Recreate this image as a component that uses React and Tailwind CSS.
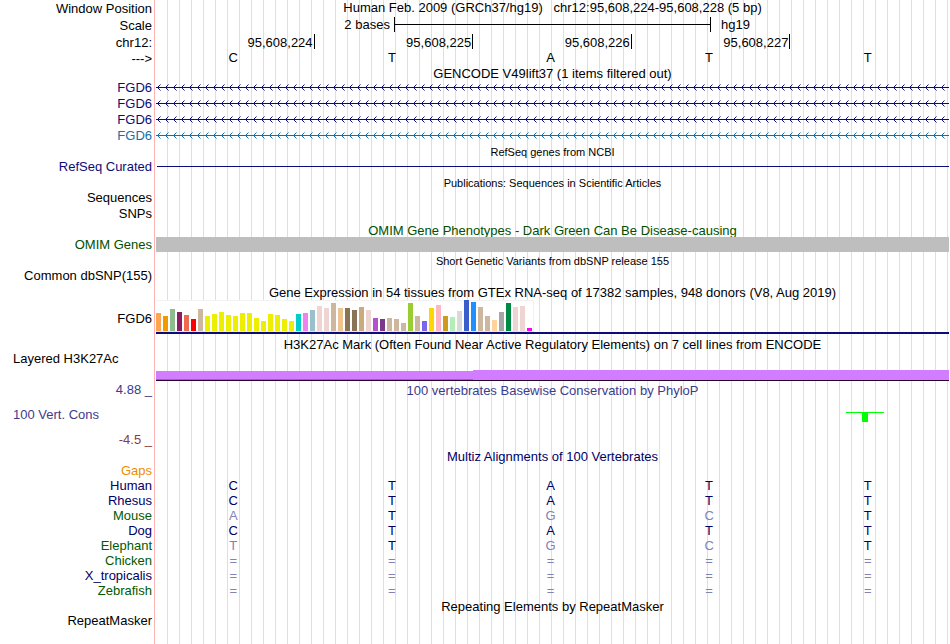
import clsx from "clsx";

const GTEX_BARS = [
  [18, "#ffa54f"], [15, "#ee9a00"], [22, "#8fbc8f"], [19, "#8b1c62"], [16, "#ee6a50"], [12, "#ff0000"],
  [22, "#cdb79e"], [15, "#eeee00"], [17, "#eeee00"], [19, "#eeee00"], [16, "#eeee00"], [15, "#eeee00"],
  [18, "#eeee00"], [18, "#eeee00"], [13, "#eeee00"], [10, "#eeee00"], [17, "#eeee00"], [16, "#eeee00"],
  [12, "#eeee00"], [10, "#eeee00"], [17, "#00cdcd"], [18, "#ee82ee"], [21, "#9ac0cd"], [25, "#eed5d2"],
  [23, "#eed5d2"], [28, "#cdb79e"], [23, "#eec591"], [23, "#8b7355"], [21, "#8b7355"], [24, "#cdaa7d"],
  [21, "#eed5d2"], [13, "#b452cd"], [12, "#7a378b"], [13, "#cdb79e"], [12, "#cdb79e"], [8, "#cdb79e"],
  [28, "#9acd32"], [15, "#cdb79e"], [10, "#7a67ee"], [23, "#ffd700"], [26, "#ffb6c1"], [15, "#cd9b1d"],
  [14, "#b4eeb4"], [20, "#d9d9d9"], [31, "#3a5fcd"], [29, "#1e90ff"], [24, "#cdb79e"], [15, "#cdb79e"],
  [11, "#ffd39b"], [19, "#a6a6a6"], [28, "#008b45"], [24, "#eed5d2"], [25, "#eed5d2"], [3, "#ff00ff"],
];

const GENES = [
  { id: "gencode-1", color: "text-[#0c0c78]" },
  { id: "gencode-2", color: "text-[#0c0c78]" },
  { id: "gencode-3", color: "text-[#0c0c78]" },
  { id: "gencode-4", color: "text-[#1470aa]" },
];

const SPECIES = [
  { name: "Human", bases: "CTATT", color: "text-[#000064]" },
  { name: "Rhesus", bases: "CTATT", color: "text-[#000064]" },
  { name: "Mouse", bases: "ATGCT", color: "text-[#005a00]" },
  { name: "Dog", bases: "CTATT", color: "text-[#000064]" },
  { name: "Elephant", bases: "TTGCT", color: "text-[#005a00]" },
  { name: "Chicken", bases: "=====", color: "text-[#005a00]" },
  { name: "X_tropicalis", bases: "=====", color: "text-[#000064]" },
  { name: "Zebrafish", bases: "=====", color: "text-[#005a00]" },
];

const REFERENCE = "CTATT";
const POSITIONS = ["95,608,224", "95,608,225", "95,608,226", "95,608,227"];

function Row({ label, labelClass, height = "h-4", children }) {
  return (
    <div className={clsx("flex", height)}>
      <div className={clsx("w-[155px] shrink-0 border-r border-[#ffb4b4] pr-0.5 text-right", labelClass)}>{label}</div>
      <div className="ml-px min-w-0 flex-1 bg-[repeating-linear-gradient(to_right,transparent_0,transparent_11px,#dcdcfa_11px,#dcdcfa_12px)]">
        {children}
      </div>
    </div>
  );
}

function Title({ small, className, children }) {
  return <h2 className={clsx("text-center", small && "text-[11px]", className)}>{children}</h2>;
}

function Bases({ bases, muted }) {
  return (
    <div className="grid grid-cols-5 text-center">
      {bases.split("").map((base, i) => (
        <span key={i} className={clsx("pr-1", muted && base !== REFERENCE[i] && "text-[#8282b4]")}>{base}</span>
      ))}
    </div>
  );
}

function Intron({ id }) {
  return (
    <svg className="block h-4 w-full" shapeRendering="crispEdges" aria-hidden="true">
      <defs>
        <pattern id={id} width="8" height="16" patternUnits="userSpaceOnUse">
          <path d="M0 7h8v1h-8zM1 7h1v1h-1zM2 6h1v3h-1zM3 5h1v1h-1zM3 9h1v1h-1z" fill="currentColor" />
          <path d="M4 4h1v1h-1zM4 10h1v1h-1z" fill="currentColor" opacity="0.5" />
        </pattern>
      </defs>
      <rect width="100%" height="16" fill={`url(#${id})`} />
    </svg>
  );
}

export default function App() {
  return (
    <main className="mr-px bg-white font-['Liberation_Sans',Arial,sans-serif] text-[13px] leading-4 text-black">
      {/* Ruler */}
      <Row label="Window Position" labelClass="pt-px">
        <h1 className="text-center whitespace-pre">Human Feb. 2009 (GRCh37/hg19)   chr12:95,608,224-95,608,228 (5 bp)</h1>
      </Row>
      <Row label="Scale" height="h-[18px]" labelClass="pt-0.5">
        <div className="flex pt-px">
          <span className="w-[30%] pr-1 text-right">2 bases</span>
          <span className="flex h-[15px] w-[40%] items-center border-x border-black">
            <span className="h-px w-full bg-black" />
          </span>
          <span className="pl-2.5">hg19</span>
        </div>
      </Row>
      <Row label="chr12:" labelClass="pt-px">
        <div className="grid grid-cols-5 text-right">
          {POSITIONS.map((pos) => (
            <span key={pos} className="h-[15px] border-r border-black pt-px pr-px">{pos}</span>
          ))}
        </div>
      </Row>
      <Row label="--->" height="h-[15px]" labelClass="pt-px">
        <Bases bases={REFERENCE} />
      </Row>

      {/* GENCODE */}
      <Row height="h-[15px]">
        <Title className="pt-px">GENCODE V49lift37 (1 items filtered out)</Title>
      </Row>
      {GENES.map((gene) => (
        <Row key={gene.id} label="FGD6" labelClass={gene.color}>
          <div className={gene.color}>
            <Intron id={gene.id} />
          </div>
        </Row>
      ))}

      {/* RefSeq */}
      <Row height="h-[15px]">
        <Title small>RefSeq genes from NCBI</Title>
      </Row>
      <Row label="RefSeq Curated" labelClass="text-[#0c0c78]">
        <div className="pt-[7px] pl-px">
          <div className="h-px bg-[#0c0c78]" />
        </div>
      </Row>

      {/* Publications */}
      <Row height="h-[15px]">
        <Title small>Publications: Sequences in Scientific Articles</Title>
      </Row>
      <Row label="Sequences" />
      <Row label="SNPs" />

      {/* OMIM */}
      <Row height="h-[15px]">
        <Title className="pt-px text-[#005000]">OMIM Gene Phenotypes - Dark Green Can Be Disease-causing</Title>
      </Row>
      <Row label="OMIM Genes" height="h-[15px]" labelClass="text-[#005000]">
        <div className="h-full bg-[#bebebe]" />
      </Row>

      {/* dbSNP */}
      <Row>
        <Title small className="pt-px">Short Genetic Variants from dbSNP release 155</Title>
      </Row>
      <Row label="Common dbSNP(155)" />

      {/* GTEx */}
      <Row>
        <Title className="pt-px">Gene Expression in 54 tissues from GTEx RNA-seq of 17382 samples, 948 donors (V8, Aug 2019)</Title>
      </Row>
      <Row label="FGD6" height="h-[34px]" labelClass="pt-[11px]">
        <div className="border-b-2 border-[#0c0c78]">
          <div className="flex h-8 w-[378px] items-end gap-0.5 border-b border-[#e6e6e6] bg-white shadow-[inset_-1px_1px_#f2f2f2]">
            {GTEX_BARS.map(([height, color], i) => (
              <span key={i} className="w-[5px]" style={{ height, backgroundColor: color }} />
            ))}
          </div>
        </div>
      </Row>

      {/* H3K27Ac */}
      <Row height="h-[17px]">
        <Title className="pt-[3px]">H3K27Ac Mark (Often Found Near Active Regulatory Elements) on 7 cell lines from ENCODE</Title>
      </Row>
      <Row label="Layered H3K27Ac" height="h-[30px]" labelClass="pl-[13px] text-left!">
        <div className="flex h-full items-end border-b border-[#280032]">
          <div className="h-[9px] w-[40%] border-b border-[#6e6eff] bg-[#d27dff]" />
          <div className="h-2.5 flex-1 bg-[#d27dff]" />
        </div>
      </Row>

      {/* PhyloP */}
      <Row label="4.88 _" height="h-[26px]" labelClass="pt-px text-[#3c3c8c]">
        <Title className="pt-0.5 text-[#3c3c8c]">100 vertebrates Basewise Conservation by PhyloP</Title>
      </Row>
      <Row label="100 Vert. Cons" height="h-[25px]" labelClass="pl-[13px] text-left! text-[#3c3c8c]">
        <div className="ml-[87%] w-[38px] pt-[5px]">
          <div className="h-px bg-[#00ff00]" />
          <div className="mx-auto h-[9px] w-1.5 bg-[#00ff00]" />
        </div>
      </Row>
      <Row label="-4.5 _" labelClass="text-[#8c3c3c]" />

      {/* Multiz */}
      <Row height="h-[15px]">
        <Title className="pt-px text-[#000064]">Multiz Alignments of 100 Vertebrates</Title>
      </Row>
      <Row label="Gaps" height="h-[15px]" labelClass="text-[#f08c00]" />
      {SPECIES.map((s) => (
        <Row key={s.name} label={s.name} height="h-[15px]" labelClass={s.color}>
          <div className="text-[#000064]">
            <Bases bases={s.bases} muted />
          </div>
        </Row>
      ))}

      {/* RepeatMasker */}
      <Row height="h-[15px]">
        <Title className="pt-px">Repeating Elements by RepeatMasker</Title>
      </Row>
      <Row label="RepeatMasker" height="h-[31px]" />
    </main>
  );
}
